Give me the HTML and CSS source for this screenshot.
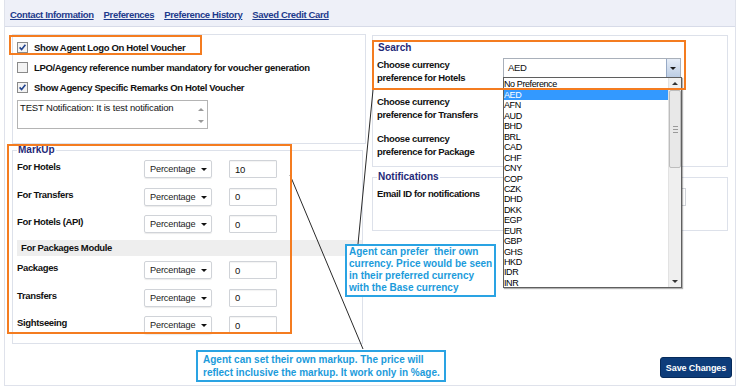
FILE: index.html
```html
<!DOCTYPE html>
<html lang="en">
<head>
    <meta charset="UTF-8">
    <title>Agent Preferences</title>
    <link rel="stylesheet" href="styles.css">
</head>
<body>

    <div class="page">

        <!-- Tabs -->
        <div class="nav">
            <a href="#">Contact Information</a>
            <a href="#">Preferences</a>
            <a href="#">Preference History</a>
            <a href="#">Saved Credit Card</a>
        </div>

        <div class="main">

            <!-- Left column -->
            <div class="col-left">
                <div class="opts">
                    <label class="chk">
                        <svg class="cb" width="11" height="11" viewBox="0 0 11 11"><rect x="0.5" y="0.5" width="10" height="10" fill="#f3f3f3" stroke="#8a8a8a"/><path d="M2.6 5.4 L4.6 7.6 L8.4 2.8" fill="none" stroke="#23458f" stroke-width="1.6"/></svg>
                        Show Agent Logo On Hotel Voucher
                    </label>
                    <label class="chk">
                        <svg class="cb" width="11" height="11" viewBox="0 0 11 11"><rect x="0.5" y="0.5" width="10" height="10" fill="#f3f3f3" stroke="#8a8a8a"/></svg>
                        LPO/Agency reference number mandatory for voucher generation
                    </label>
                    <label class="chk">
                        <svg class="cb" width="11" height="11" viewBox="0 0 11 11"><rect x="0.5" y="0.5" width="10" height="10" fill="#f3f3f3" stroke="#8a8a8a"/><path d="M2.6 5.4 L4.6 7.6 L8.4 2.8" fill="none" stroke="#23458f" stroke-width="1.6"/></svg>
                        Show Agency Specific Remarks On Hotel Voucher
                    </label>
                    <div class="note">
                        <span class="note-text">TEST Notification: It is test notification</span>
                        <span class="note-sb"><i class="arr-up"></i><i class="arr-down"></i></span>
                    </div>
                </div>

                <fieldset class="markup">
                    <legend>MarkUp</legend>
                    <div class="mrow"><span class="mlabel">For Hotels</span><span class="pct">Percentage</span><span class="num">10</span></div>
                    <div class="mrow"><span class="mlabel">For Transfers</span><span class="pct">Percentage</span><span class="num">0</span></div>
                    <div class="mrow"><span class="mlabel">For Hotels (API)</span><span class="pct">Percentage</span><span class="num">0</span></div>
                    <div class="subhead">For Packages Module</div>
                    <div class="mrow"><span class="mlabel">Packages</span><span class="pct">Percentage</span><span class="num">0</span></div>
                    <div class="mrow"><span class="mlabel">Transfers</span><span class="pct">Percentage</span><span class="num">0</span></div>
                    <div class="mrow"><span class="mlabel">Sightseeing</span><span class="pct">Percentage</span><span class="num">0</span></div>
                </fieldset>
            </div>

            <!-- Right column -->
            <div class="col-right">
                <div class="search">
                    <div class="box-title">Search</div>
                    <div class="crow">
                        <span class="clabel">Choose currency<br>preference for Hotels</span>
                        <span class="csel open">AED
                            <!-- open list -->
                            <span class="dd">
                                <ul>
                                    <li class="none">No Preference</li>
                                    <li class="on">AED</li>
                                    <li>AFN</li>
                                    <li>AUD</li>
                                    <li>BHD</li>
                                    <li>BRL</li>
                                    <li>CAD</li>
                                    <li>CHF</li>
                                    <li>CNY</li>
                                    <li>COP</li>
                                    <li>CZK</li>
                                    <li>DHD</li>
                                    <li>DKK</li>
                                    <li>EGP</li>
                                    <li>EUR</li>
                                    <li>GBP</li>
                                    <li>GHS</li>
                                    <li>HKD</li>
                                    <li>IDR</li>
                                    <li>INR</li>
                                </ul>
                                <span class="dd-sb">
                                    <span class="sb-btn"><i class="arr-up"></i></span>
                                    <span class="sb-thumb"></span>
                                    <span class="sb-track"></span>
                                    <span class="sb-btn"><i class="arr-down"></i></span>
                                </span>
                            </span>
                        </span>
                    </div>
                    <!-- these two selects sit under the open list -->
                    <div class="crow">
                        <span class="clabel">Choose currency<br>preference for Transfers</span>
                        <span class="csel"></span>
                    </div>
                    <div class="crow">
                        <span class="clabel">Choose currency<br>preference for Package</span>
                        <span class="csel"></span>
                    </div>
                </div>

                <fieldset class="notif">
                    <legend>Notifications</legend>
                    <div class="crow">
                        <span class="clabel">Email ID for notifications</span>
                        <span class="email"></span>
                    </div>
                </fieldset>
            </div>
        </div>

        <div class="foot">
            <button class="save">Save Changes</button>
        </div>
    </div>

    <!-- Annotations -->
    <svg class="leaders" width="740" height="386" viewBox="0 0 740 386">
        <line x1="373" y1="90" x2="358" y2="244" stroke="#2a2a2a" stroke-width="1"/>
        <line x1="290" y1="175" x2="363" y2="349" stroke="#2a2a2a" stroke-width="1"/>
    </svg>
    <div class="hl hl-logo"></div>
    <div class="hl hl-markup"></div>
    <div class="hl hl-search"></div>

    <div class="callout callout-currency">Agent can prefer&nbsp; their own<br>currency. Price would be seen<br>in their preferred currency<br>with the Base currency</div>
    <div class="callout callout-markup">Agent can set their own markup. The price will<br>reflect inclusive the markup. It work only in %age.</div>

</body>
</html>
```

FILE: styles.css
```css
* {
    margin: 0;
    padding: 0;
    box-sizing: border-box;
}

body {
    position: relative;
    width: 740px;
    height: 386px;
    overflow: hidden;
    background: #fff;
    color: #111;
    font-family: 'Liberation Sans', Arial, sans-serif;
    font-size: 9.5px;
    letter-spacing: -0.3px;
}

.page {
    margin-left: 4px;
    width: 732px;
    height: 386px;
    border: 1px solid #dfe2eb;
    border-top: none;
}

/* Tabs */
.nav {
    height: 27px;
    display: flex;
    gap: 10px;
    padding: 9px 0 0 5px;
    background: #eef0f8;
    border-bottom: 1px solid #d7dbe8;
}

.nav a {
    font-weight: bold;
    line-height: 12px;
    color: #1d3a8c;
    letter-spacing: -0.35px;
}

.main {
    display: flex;
    padding: 7px 0 0 7px;
}

/* Left column */
.col-left {
    width: 354px;
}

.opts {
    height: 110px;
    padding: 2px 0 0 4px;
    border: 1px solid #dde1ea;
}

.chk {
    height: 20px;
    display: flex;
    align-items: center;
    gap: 6px;
    font-weight: bold;
    letter-spacing: -0.35px;
}

.cb {
    flex: none;
}

.note {
    width: 191px;
    height: 29px;
    margin-top: 3px;
    display: flex;
    border: 1px solid #b4b4b4;
    letter-spacing: -0.15px;
}

.note-text {
    flex: 1;
    padding: 1px 2px;
    line-height: 12px;
}

.note-sb {
    width: 12px;
    display: flex;
    flex-direction: column;
    justify-content: space-between;
    align-items: center;
    padding: 7px 0 5px;
}

.arr-up,
.arr-down {
    display: block;
    width: 0;
    height: 0;
    border-left: 3px solid transparent;
    border-right: 3px solid transparent;
}

.arr-up {
    border-bottom: 3px solid #9a9a9a;
}

.arr-down {
    border-top: 3px solid #9a9a9a;
}

fieldset {
    min-width: 0;
    border: 1px solid #dde1ea;
}

legend {
    padding: 0 1px;
    font-size: 10px;
    font-weight: bold;
    line-height: 12px;
    color: #1f2a78;
    letter-spacing: 0;
}

/* MarkUp */
.markup {
    width: 351px;
    height: 200px;
    padding: 4px 0 10px 4px;
}

.mrow {
    height: 18px;
    display: flex;
    align-items: flex-start;
    margin-top: 9.5px;
}

.mrow:first-of-type {
    margin-top: 0;
}

.subhead + .mrow {
    margin-top: 5px;
}

.mlabel {
    width: 127px;
    margin-top: 1px;
    line-height: 12px;
    font-weight: bold;
    letter-spacing: -0.35px;
}

.pct {
    position: relative;
    width: 68px;
    height: 18px;
    display: flex;
    align-items: center;
    padding-left: 5px;
    border: 1px solid #d0d3d8;
    border-radius: 2px;
    box-shadow: 0 1px 1px rgba(0, 0, 0, 0.08);
    font-size: 9.2px;
    letter-spacing: -0.15px;
    color: #222;
}

.pct::after {
    content: "";
    position: absolute;
    right: 4px;
    top: 7px;
    border-left: 3px solid transparent;
    border-right: 3px solid transparent;
    border-top: 3px solid #111;
}

.num {
    width: 48px;
    height: 18px;
    margin-left: 17px;
    display: flex;
    align-items: center;
    padding-left: 5px;
    border: 1px solid #d0d3d8;
    border-radius: 1px;
    box-shadow: inset 0 1px 1px rgba(0, 0, 0, 0.05);
}

.subhead {
    height: 16px;
    margin-top: 7px;
    padding-left: 4px;
    line-height: 16px;
    font-weight: bold;
    background: #eeeeee;
    letter-spacing: -0.35px;
}

/* Right column */
.col-right {
    width: 356px;
    margin-left: 6px;
}

.search {
    height: 132px;
    margin-top: 1px;
    padding-left: 4px;
    border: 1px solid #dde1ea;
}

.box-title {
    margin-top: 6px;
    padding-left: 1px;
    font-size: 10px;
    font-weight: bold;
    line-height: 12px;
    color: #1f2a78;
    letter-spacing: 0;
}

.crow {
    height: 26px;
    display: flex;
    align-items: flex-start;
    margin-top: 11px;
}

.box-title + .crow {
    margin-top: 3.5px;
}

.clabel {
    width: 126px;
    line-height: 13px;
    font-weight: bold;
    letter-spacing: -0.35px;
}

.csel {
    position: relative;
    width: 178px;
    height: 20px;
    display: flex;
    align-items: center;
    padding-left: 4px;
    border: 1px solid #a9b0ba;
    background: #fff;
    letter-spacing: -0.3px;
}

.csel::after {
    content: "";
    position: absolute;
    right: 0;
    top: 0;
    width: 13px;
    height: 18px;
    border-left: 1px solid #97aac6;
    background: linear-gradient(#e6edf7, #bccde4);
}

.csel::before {
    content: "";
    position: absolute;
    right: 4px;
    top: 8px;
    z-index: 1;
    border-left: 3px solid transparent;
    border-right: 3px solid transparent;
    border-top: 3px solid #1a1a1a;
}

/* Open currency list */
.dd {
    position: absolute;
    left: -1px;
    top: 18px;
    z-index: 5;
    width: 179px;
    height: 211px;
    display: flex;
    overflow: hidden;
    background: #fff;
    border: 1px solid #5f5f5f;
    box-shadow: 1px 1px 1px rgba(0, 0, 0, 0.3);
}

.dd ul {
    flex: 1;
    list-style: none;
}

.dd li {
    height: 10.45px;
    line-height: 10.45px;
    font-size: 9px;
    letter-spacing: -0.4px;
    color: #000;
}

.dd li.none {
    height: 12.5px;
    line-height: 12.5px;
}

.dd li.on {
    background: #3399ff;
    color: #fff;
}

.dd-sb {
    width: 13px;
    display: flex;
    flex-direction: column;
    background: #efefef;
    border-left: 1px solid #e2e2e2;
}

.sb-btn {
    height: 11px;
    display: flex;
    align-items: center;
    justify-content: center;
}

.sb-btn .arr-up {
    border-bottom-color: #333;
}

.sb-btn .arr-down {
    border-top-color: #333;
}

.sb-thumb {
    position: relative;
    height: 78px;
    margin-top: 1px;
    background: #e8e8e8;
    border: 1px solid #bdbdbd;
    border-radius: 2px;
}

.sb-thumb::after {
    content: "";
    position: absolute;
    left: 3px;
    top: 35px;
    width: 5px;
    height: 5px;
    border-top: 1px solid #999;
    border-bottom: 1px solid #999;
    background: linear-gradient(#999, #999) center / 5px 1px no-repeat;
}

.sb-track {
    flex: 1;
}

/* Notifications */
.notif {
    height: 60px;
    margin-top: 4px;
    padding: 4px 0 0 4px;
}

.notif .crow {
    margin-top: 0;
    height: 18px;
}

.email {
    width: 183px;
    height: 18px;
    margin-top: 0.5px;
    border: 1px solid #d0d3d8;
}

.foot {
    display: flex;
    justify-content: flex-end;
    margin-top: 13px;
    padding-right: 3px;
}

.save {
    width: 72px;
    height: 21px;
    border: 1px solid #062a5a;
    border-radius: 3px;
    background: #0d3c7a;
    color: #fff;
    font-family: inherit;
    font-size: 9px;
    font-weight: bold;
    letter-spacing: -0.1px;
}

/* Annotations */
.leaders {
    position: absolute;
    left: 0;
    top: 0;
    z-index: 6;
    pointer-events: none;
}

.hl {
    position: absolute;
    z-index: 7;
    border: 2px solid #f47c20;
}

.hl-logo {
    left: 9px;
    top: 35px;
    width: 193px;
    height: 20px;
}

.hl-markup {
    left: 7px;
    top: 144px;
    width: 285px;
    height: 190px;
}

.hl-search {
    left: 372px;
    top: 40px;
    width: 314px;
    height: 50px;
}

.callout {
    position: absolute;
    z-index: 8;
    background: #fff;
    border: 2px solid #2aa3e3;
    color: #1c9bdb;
    font-size: 10px;
    font-weight: bold;
    letter-spacing: 0;
}

.callout-currency {
    left: 345px;
    top: 244px;
    width: 151px;
    height: 53px;
    padding-left: 2px;
    line-height: 12px;
}

.callout-markup {
    left: 196px;
    top: 350px;
    width: 250px;
    height: 32px;
    padding: 1px 0 0 5px;
    line-height: 13px;
}
```
